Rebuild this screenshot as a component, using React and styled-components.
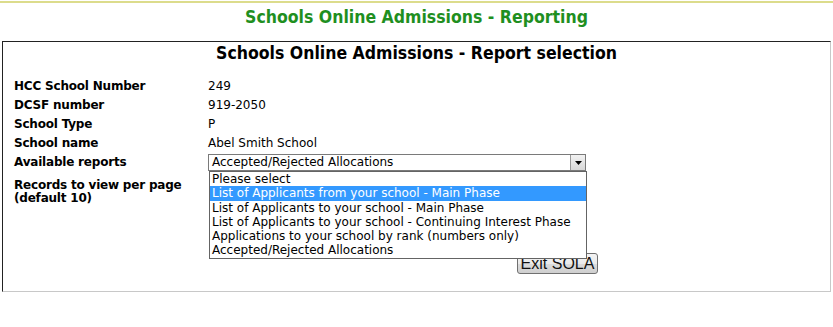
import React from "react";
import styled, { createGlobalStyle } from "styled-components";

const reports = [
  "Please select",
  "List of Applicants from your school - Main Phase",
  "List of Applicants to your school - Main Phase",
  "List of Applicants to your school - Continuing Interest Phase",
  "Applications to your school by rank (numbers only)",
  "Accepted/Rejected Allocations",
];

const details = [
  ["HCC School Number", "249"],
  ["DCSF number", "919-2050"],
  ["School Type", "P"],
  ["School name", "Abel Smith School"],
];

function App() {
  return (
    <>
      <GlobalStyle />
      <TopRule />
      <PageTitle>Schools Online Admissions - Reporting</PageTitle>

      <PanelStyled>
        <h2>Schools Online Admissions - Report selection</h2>

        <DetailsGrid>
          {details.map(([label, value]) => (
            <React.Fragment key={label}>
              <Label>{label}</Label>
              <Value>{value}</Value>
            </React.Fragment>
          ))}

          <Label>Available reports</Label>
          <SelectWrap>
            <SelectBox>
              <span>Accepted/Rejected Allocations</span>
              <ArrowButton>
                <svg width="7" height="4" viewBox="0 0 7 4">
                  <path d="M0 0h7L3.5 4z" fill="#000" />
                </svg>
              </ArrowButton>
            </SelectBox>
            <DropList>
              {reports.map((r, i) => (
                <Option key={r} $active={i === 1}>{r}</Option>
              ))}
            </DropList>
          </SelectWrap>

          <Label $multi>
            Records to view per page
            <br />
            (default 10)
          </Label>
          <div />
        </DetailsGrid>

        <ButtonRow>
          <ExitButton>Exit SOLA</ExitButton>
        </ButtonRow>
      </PanelStyled>
    </>
  );
}

const GlobalStyle = createGlobalStyle`
body{
  margin: 0;
  background: #fff;
  font-family: "DejaVu Sans", Verdana, sans-serif;
  color: #000;
}
`;

const TopRule = styled.div`
height: 2px;
margin-top: 1px;
background-color: #dcdc8c;
`;

const PageTitle = styled.h1`
margin: 0;
padding-top: 4px;
height: 38px;
box-sizing: border-box;
text-align: center;
font-family: "DejaVu Sans Condensed", Tahoma, sans-serif;
font-weight: bold;
font-size: 17.5px;
line-height: 21px;
color: #1f8f1f;
`;

const PanelStyled = styled.main`
margin: 0 2px 0 2px;
height: 251px;
box-sizing: border-box;
border-style: solid;
border-width: 1px;
border-color: #222 #c8c8c8 #c8c8c8 #222;
padding: 0 11px;

h2{
  margin: 0;
  padding-top: 1px;
  text-align: center;
  font-family: "DejaVu Sans Condensed", Tahoma, sans-serif;
  font-weight: bold;
  font-size: 17.5px;
  line-height: 20px;
}
`;

const DetailsGrid = styled.div`
display: grid;
grid-template-columns: 194px 380px;
grid-auto-rows: 19px;
margin-top: 14px;
font-size: 12px;

& > :nth-last-child(-n+2){
  margin-top: 7px;
  height: 28px;
}
`;

const Label = styled.div`
font-weight: bold;
line-height: ${(p) => (p.$multi ? "13px" : "19px")};
letter-spacing: -0.2px;
`;

const Value = styled.div`
line-height: 19px;
`;

const SelectWrap = styled.div`
position: relative;
align-self: center;
`;

const SelectBox = styled.div`
display: flex;
align-items: center;
justify-content: space-between;
width: 378px;
height: 17px;
box-sizing: border-box;
border: 1px solid #7a7a7a;
padding-left: 3px;
font-size: 12px;
line-height: 15px;
`;

const ArrowButton = styled.div`
display: flex;
align-items: center;
justify-content: center;
width: 15px;
height: 15px;
box-sizing: border-box;
border-left: 1px solid #999;
background: linear-gradient(#f2f2f2, #d8d8d8);
`;

const DropList = styled.div`
position: absolute;
top: 17px;
left: 1px;
z-index: 2;
width: 378px;
box-sizing: border-box;
border: 1px solid #646464;
background-color: #fff;
`;

const Option = styled.div`
padding-left: 2px;
height: 14.3px;
font-size: 12px;
line-height: 14px;
white-space: nowrap;
background-color: ${(p) => (p.$active ? "#3399ff" : "transparent")};
color: ${(p) => (p.$active ? "#fff" : "#000")};
`;

const ButtonRow = styled.div`
display: flex;
padding-left: 503px;
margin-top: 62px;
`;

const ExitButton = styled.button`
width: 81px;
height: 21px;
padding: 0;
border: 1px solid #707070;
border-radius: 3px;
background: linear-gradient(#f4f4f4 0%, #ebebeb 50%, #dcdcdc 51%, #cfcfcf 100%);
font-family: "Liberation Sans", Arial, sans-serif;
font-size: 16px;
line-height: 19px;
color: #111;
`;

export default App;
